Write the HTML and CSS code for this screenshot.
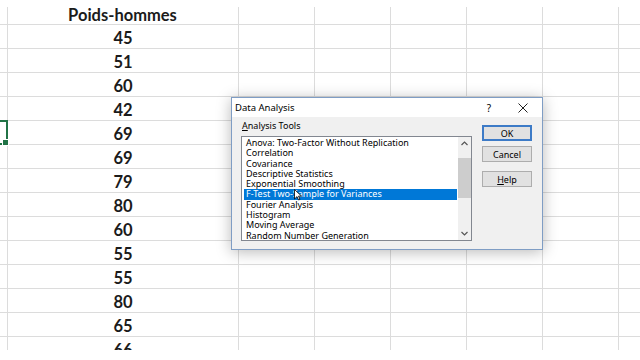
FILE: index.html
```html
<!DOCTYPE html>
<html lang="fr">
<head>
    <meta charset="UTF-8">
    <title>Poids-hommes - Data Analysis</title>
    <link rel="stylesheet" href="styles.css">
</head>
<body>
    <div class="sheet">
        <div class="cell head"></div><div class="cell head title">Poids-hommes</div><div class="cell head"></div><div class="cell head"></div><div class="cell head"></div><div class="cell head"></div><div class="cell head"></div><div class="cell head"></div>
        <div class="cell"></div><div class="cell num">45</div><div class="cell"></div><div class="cell"></div><div class="cell"></div><div class="cell"></div><div class="cell"></div><div class="cell"></div>
        <div class="cell"></div><div class="cell num">51</div><div class="cell"></div><div class="cell"></div><div class="cell"></div><div class="cell"></div><div class="cell"></div><div class="cell"></div>
        <div class="cell"></div><div class="cell num">60</div><div class="cell"></div><div class="cell"></div><div class="cell"></div><div class="cell"></div><div class="cell"></div><div class="cell"></div>
        <div class="cell"></div><div class="cell num">42</div><div class="cell"></div><div class="cell"></div><div class="cell"></div><div class="cell"></div><div class="cell"></div><div class="cell"></div>
        <div class="cell sel"></div><div class="cell num">69</div><div class="cell"></div><div class="cell"></div><div class="cell"></div><div class="cell"></div><div class="cell"></div><div class="cell"></div>
        <div class="cell"></div><div class="cell num">69</div><div class="cell"></div><div class="cell"></div><div class="cell"></div><div class="cell"></div><div class="cell"></div><div class="cell"></div>
        <div class="cell"></div><div class="cell num">79</div><div class="cell"></div><div class="cell"></div><div class="cell"></div><div class="cell"></div><div class="cell"></div><div class="cell"></div>
        <div class="cell"></div><div class="cell num">80</div><div class="cell"></div><div class="cell"></div><div class="cell"></div><div class="cell"></div><div class="cell"></div><div class="cell"></div>
        <div class="cell"></div><div class="cell num">60</div><div class="cell"></div><div class="cell"></div><div class="cell"></div><div class="cell"></div><div class="cell"></div><div class="cell"></div>
        <div class="cell"></div><div class="cell num">55</div><div class="cell"></div><div class="cell"></div><div class="cell"></div><div class="cell"></div><div class="cell"></div><div class="cell"></div>
        <div class="cell"></div><div class="cell num">55</div><div class="cell"></div><div class="cell"></div><div class="cell"></div><div class="cell"></div><div class="cell"></div><div class="cell"></div>
        <div class="cell"></div><div class="cell num">80</div><div class="cell"></div><div class="cell"></div><div class="cell"></div><div class="cell"></div><div class="cell"></div><div class="cell"></div>
        <div class="cell"></div><div class="cell num">65</div><div class="cell"></div><div class="cell"></div><div class="cell"></div><div class="cell"></div><div class="cell"></div><div class="cell"></div>
        <div class="cell"></div><div class="cell num">66</div><div class="cell"></div><div class="cell"></div><div class="cell"></div><div class="cell"></div><div class="cell"></div><div class="cell"></div>
    </div>

    <div class="dialog">
        <div class="dialog-title">
            <span class="dialog-name">Data Analysis</span>
            <span class="dialog-help">?</span>
            <svg class="dialog-close" width="10" height="10" viewBox="0 0 10 10"><path d="M0.5 0.5 L9.5 9.5 M9.5 0.5 L0.5 9.5" stroke="#222" stroke-width="1" fill="none"/></svg>
        </div>
        <div class="dialog-body">
            <div class="tools">
                <div class="tools-label"><u>A</u>nalysis Tools</div>
                <div class="listbox">
                    <ul class="items">
                        <li>Anova: Two-Factor Without Replication</li>
                        <li>Correlation</li>
                        <li>Covariance</li>
                        <li>Descriptive Statistics</li>
                        <li>Exponential Smoothing</li>
                        <li class="active">F-Test Two-Sample for Variances</li>
                        <li>Fourier Analysis</li>
                        <li>Histogram</li>
                        <li>Moving Average</li>
                        <li>Random Number Generation</li>
                    </ul>
                    <div class="scrollbar">
                        <svg class="arrow" width="7" height="5" viewBox="0 0 7 5"><path d="M0.5 4 L3.5 1 L6.5 4" stroke="#555" stroke-width="1.2" fill="none"/></svg>
                        <div class="track"><div class="thumb"></div></div>
                        <svg class="arrow" width="7" height="5" viewBox="0 0 7 5"><path d="M0.5 1 L3.5 4 L6.5 1" stroke="#555" stroke-width="1.2" fill="none"/></svg>
                    </div>
                </div>
            </div>
            <div class="buttons">
                <button class="btn default">OK</button>
                <button class="btn">Cancel</button>
                <button class="btn help"><u>H</u>elp</button>
            </div>
        </div>
    </div>

    <svg class="cursor" width="8" height="12" viewBox="0 0 8 12"><path d="M0.5 0.5 L0.5 10 L3 7.6 L4.6 11 L6 10.4 L4.5 7.1 L7.5 7.1 Z" fill="#fff" stroke="#000" stroke-width="0.8"/></svg>
</body>
</html>
```

FILE: styles.css
```css
/* --- Base --- */
* { box-sizing: border-box; }
html, body { margin: 0; height: 100%; }
body {
    background: #ffffff;
    overflow: hidden;
    position: relative;
    font-family: 'Noto Sans', 'DejaVu Sans', sans-serif;
}

/* --- Feuille --- */
.sheet {
    display: grid;
    grid-template-columns: 8px 231px repeat(6, 76px);
    grid-template-rows: 25px;
    grid-auto-rows: 24px;
    height: 350px;
    overflow: hidden;
}
.cell {
    border-right: 1px solid #dcdcdc;
    border-bottom: 1px solid #dcdcdc;
}
.cell.head {
    border-right: 0;
    background: linear-gradient(#dcdcdc, #dcdcdc) right bottom / 1px 17px no-repeat;
}
.num, .title {
    font-family: Lato, 'Open Sans', sans-serif;
    font-weight: 700;
    font-size: 16.5px;
    color: #1b1b1b;
    text-align: center;
    line-height: 27px;
}
.title { line-height: 31px; padding-right: 2px; }
.sel {
    position: relative;
    border: 2px solid #217346;
    border-left: 0;
    margin-top: -1px;
    height: 25px;
}
.sel::after {
    content: '';
    position: absolute;
    right: -3px;
    bottom: -3px;
    width: 5px;
    height: 5px;
    background: #217346;
    border: 1px solid #fff;
}

/* --- Boîte de dialogue --- */
.dialog {
    position: absolute;
    left: 231px;
    top: 97px;
    width: 312px;
    height: 153px;
    border: 1px solid #7f9dc4;
    background: #f0f0f0;
    box-shadow: 0 2px 14px rgba(0, 0, 0, 0.28);
    display: flex;
    flex-direction: column;
    color: #000;
}
.dialog-title {
    height: 19px;
    background: #ffffff;
    display: flex;
    align-items: center;
    padding-left: 3px;
    font-size: 9.5px;
}
.dialog-name { flex: 1; }
.dialog-help { margin-right: 27px; font-size: 10px; }
.dialog-close { margin-right: 14px; }

.dialog-body {
    display: flex;
    padding: 3px 0 0 9px;
}
.tools-label { font-size: 9px; line-height: 12px; padding-left: 1px; margin-bottom: 4px; }
.listbox {
    width: 231px;
    height: 105px;
    border: 1px solid #828790;
    background: #ffffff;
    display: flex;
}
.items {
    list-style: none;
    margin: 0;
    padding: 1px 1px 0 2px;
    flex: 1;
    font-size: 9px;
    line-height: 10.3px;
    overflow: hidden;
    white-space: nowrap;
}
.items li { padding-left: 2px; }
.items li.active { background: #0078d7; color: #ffffff; }

.scrollbar {
    width: 13px;
    background: #f0f0f0;
    display: flex;
    flex-direction: column;
    align-items: center;
}
.scrollbar .arrow { margin: 4px 0; }
.track { flex: 1; width: 100%; padding-top: 8px; }
.thumb { height: 40px; background: #cdcdcd; }

.buttons {
    display: flex;
    flex-direction: column;
    margin: 5px 0 0 10px;
}
.btn {
    width: 50px;
    height: 16px;
    padding: 0;
    font-family: inherit;
    font-size: 9px;
    color: #000;
    background: #e1e1e1;
    border: 1px solid #adadad;
    margin-bottom: 5px;
}
.btn.default { border: 2px solid #3d7bc7; }
.btn.help { margin-top: 4px; }

/* --- Curseur --- */
.cursor { position: absolute; left: 294px; top: 189px; }
```
